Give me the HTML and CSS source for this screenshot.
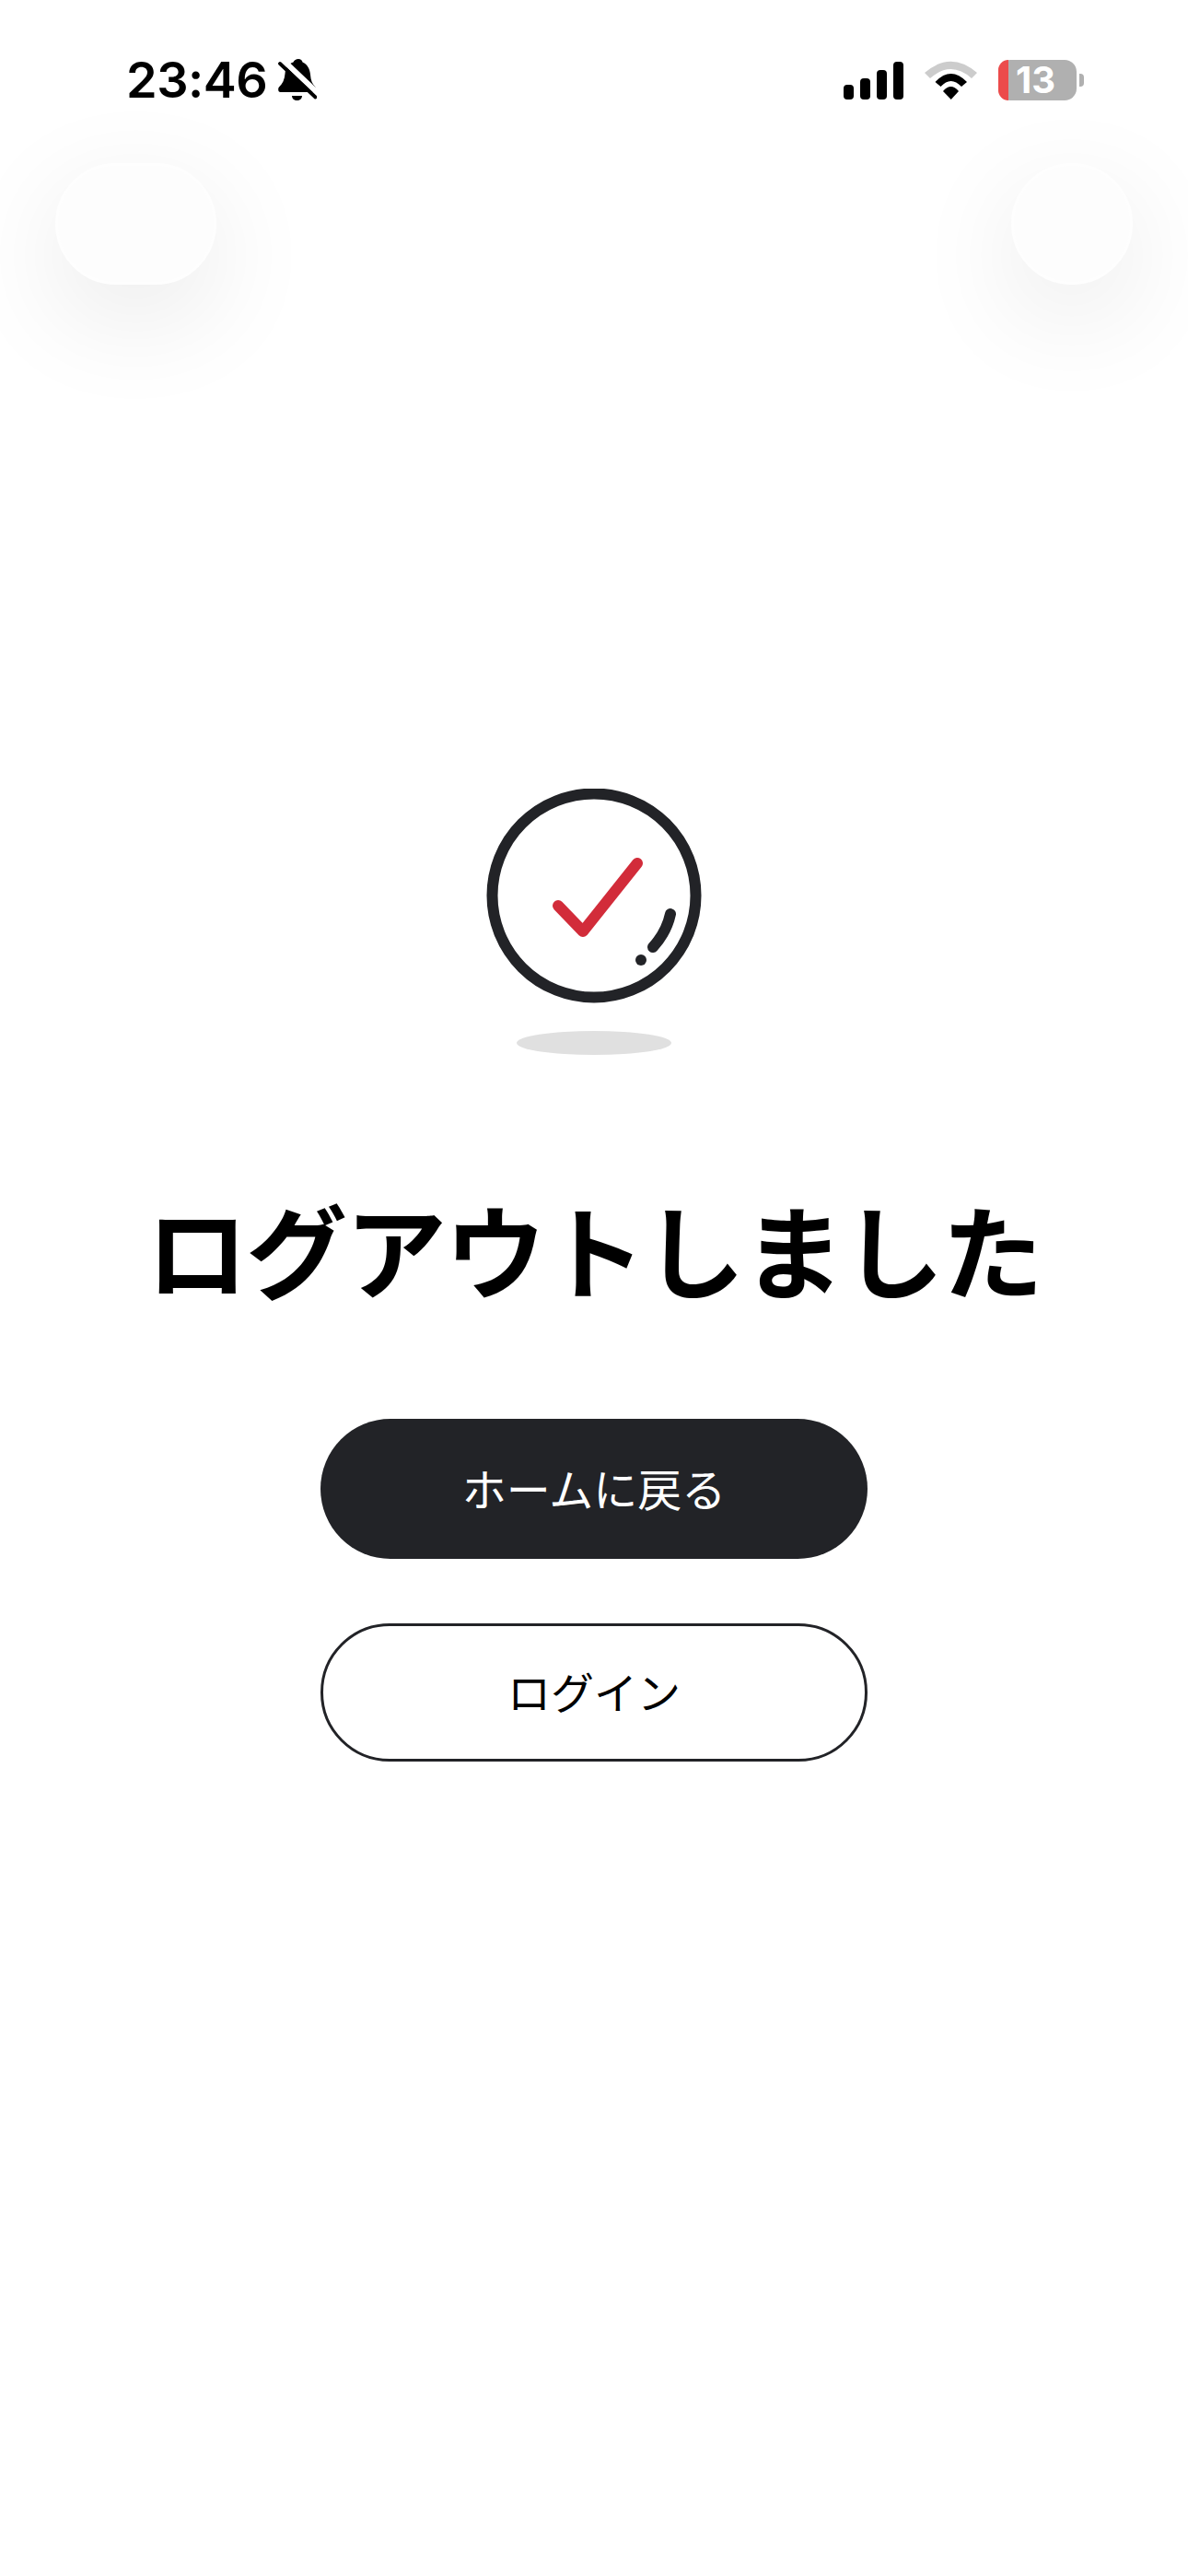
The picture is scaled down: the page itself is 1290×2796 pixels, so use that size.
FILE: index.html
```html
<!DOCTYPE html>
<html lang="ja">
<head>
  <meta charset="utf-8">
  <link rel="stylesheet" href="styles.css">
</head>
<body>
  <div class="screen">
    <div class="status-bar">
      <div class="status-left">
        <span class="status-time">23:46</span>
        <svg class="bell-icon" viewBox="0 0 42 46" width="42" height="46">
          <path d="M22 0c2.500 0 4 1.500 4.500 3.500C32 6 34.500 11 35 17c.5 6 2 10 5 13 1.500 1.500 1 6-1.500 6H2.500C0 36-.5 32 1 30.500 5 27 7 22 7.500 16 8 10 11 5 16.500 3.500 17.500 1.500 19.500 0 22 0z" fill="#000"/>
          <path d="M15 40h11c0 3-2.500 5-5.500 5S15 43 15 40z" fill="#000"/>
          <path d="M5 1l40 38" stroke="#fff" stroke-width="6" fill="none"/>
          <path d="M2 5l38.500 36.500" stroke="#000" stroke-width="3.800" stroke-linecap="round" fill="none"/>
        </svg>
      </div>
      <div class="status-right">
        <div class="signal">
          <span class="signal-bar bar-1"></span>
          <span class="signal-bar bar-2"></span>
          <span class="signal-bar bar-3"></span>
          <span class="signal-bar bar-4"></span>
        </div>
        <svg class="wifi-icon" viewBox="0 0 57 42" width="57" height="42">
          <path d="M0 13Q28.500-11.600 57 13L51 19Q28.500-1 6 19z" fill="#ccc"/>
          <path d="M11.500 23Q28.500 5 46 23L40 28Q28.500 16 17.500 28z" fill="#000"/>
          <path d="M20 33Q28.500 23 37 33L28.700 42z" fill="#000"/>
        </svg>
        <div class="battery">
          <div class="battery-body">
            <span class="battery-level"></span>
            <span class="battery-text">13</span>
          </div>
          <span class="battery-nub"></span>
        </div>
      </div>
    </div>

    <div class="nav-row">
      <div class="nav-btn nav-btn-wide"></div>
      <div class="nav-btn nav-btn-round"></div>
    </div>

    <div class="content">
      <svg class="done-icon" viewBox="0 0 234 290" width="234" height="290">
        <circle cx="117" cy="116" r="110.500" fill="none" stroke="#222327" stroke-width="12"/>
        <path d="M78 127l27 28 59-74" fill="none" stroke="#d22c3a" stroke-width="12" stroke-linecap="round" stroke-linejoin="round"/>
        <path d="M200 136c-3 14-9 25-19 36" fill="none" stroke="#222327" stroke-width="12" stroke-linecap="round"/>
        <circle cx="168" cy="186" r="6" fill="#222327"/>
        <ellipse cx="117" cy="276" rx="84" ry="13" fill="#e0e0e0"/>
      </svg>
      <h1 class="title">ログアウトしました</h1>
      <a class="btn btn-dark">ホームに戻る</a>
      <a class="btn btn-outline">ログイン</a>
    </div>
  </div>
</body>
</html>
```

FILE: styles.css
```css
* {
  box-sizing: border-box;
}

body {
  margin: 0;
  background-color: #fff;
  font-family: "Noto Sans CJK JP", "Noto Sans", sans-serif;
  color: #000;
}

.screen {
  width: 1290px;
  height: 2796px;
  overflow: hidden;
  display: flex;
  flex-direction: column;
}

.status-bar {
  height: 174px;
  padding: 0 113px 0 137px;
  display: flex;
  align-items: center;
  justify-content: space-between;
}

.status-left {
  display: flex;
  align-items: center;
  gap: 12px;
}

.status-time {
  font-family: Inter, "Liberation Sans", sans-serif;
  font-size: 54px;
  font-weight: 600;
  letter-spacing: -0.5px;
  line-height: 60px;
}

.bell-icon {
  display: block;
}

.status-right {
  display: flex;
  align-items: center;
}

.signal {
  display: flex;
  align-items: flex-end;
  gap: 7px;
  height: 41px;
  margin-right: 23px;
}

.signal-bar {
  width: 11px;
  background-color: #000;
  border-radius: 4px;
}

.bar-1 { height: 16px; }
.bar-2 { height: 23px; }
.bar-3 { height: 32px; }
.bar-4 { height: 41px; }

.wifi-icon {
  display: block;
  margin-right: 23px;
}

.battery {
  display: flex;
  align-items: center;
}

.battery-body {
  position: relative;
  width: 85px;
  height: 44px;
  border-radius: 13px;
  background-color: #b0b0b0;
  display: flex;
  align-items: center;
  justify-content: center;
}

.battery-level {
  position: absolute;
  left: 0;
  top: 0;
  bottom: 0;
  width: 11px;
  border-radius: 13px 0 0 13px;
  background-color: #ec4b4b;
}

.battery-text {
  font-family: Inter, "Liberation Sans", sans-serif;
  font-size: 40px;
  font-weight: 700;
  line-height: 44px;
  color: #fff;
  padding-right: 4px;
}

.battery-nub {
  width: 5px;
  height: 14px;
  margin-left: 3px;
  background-color: #b0b0b0;
  border-radius: 0 4px 4px 0;
}

.nav-row {
  margin-top: 3px;
  padding: 0 60px;
  display: flex;
  justify-content: space-between;
}

.nav-btn {
  height: 132px;
  border-radius: 66px;
  background-color: #fdfdfd;
  border: 3px solid #fefefe;
  box-shadow: 0 34px 120px rgba(0, 0, 0, 0.09);
}

.nav-btn-wide {
  width: 175px;
}

.nav-btn-round {
  width: 132px;
}

.content {
  display: flex;
  flex-direction: column;
  align-items: center;
}

.done-icon {
  display: block;
  margin-top: 547px;
}

.title {
  margin: 143px 0 0;
  font-size: 110px;
  font-weight: 700;
  letter-spacing: -2px;
  line-height: 130px;
  white-space: nowrap;
}

.btn {
  width: 594px;
  display: flex;
  align-items: center;
  justify-content: center;
  border-radius: 76px;
  padding-bottom: 5px;
  font-size: 47px;
  font-weight: 400;
}

.btn-dark {
  height: 152px;
  margin-top: 121px;
  background-color: #222327;
  color: #fff;
  font-size: 48px;
}

.btn-outline {
  height: 150px;
  margin-top: 70px;
  border: 3px solid #222327;
  color: #000;
}
```
